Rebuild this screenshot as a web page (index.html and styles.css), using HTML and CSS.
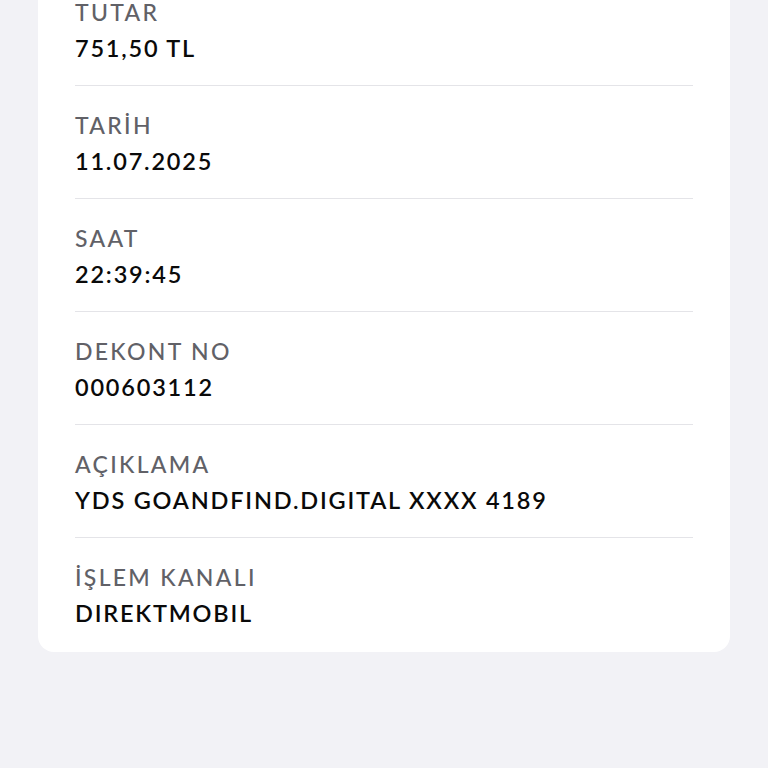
FILE: index.html
```html
<!DOCTYPE html>
<html lang="tr">
<head>
<meta charset="utf-8">
<link rel="stylesheet" href="styles.css">
</head>
<body>
<main class="page">
  <section class="card">
    <div class="row"><div class="label">TUTAR</div><div class="value">751,50 TL</div></div>
    <div class="row"><div class="label">TARİH</div><div class="value">11.07.2025</div></div>
    <div class="row"><div class="label">SAAT</div><div class="value">22:39:45</div></div>
    <div class="row"><div class="label">DEKONT NO</div><div class="value">000603112</div></div>
    <div class="row"><div class="label">AÇIKLAMA</div><div class="value">YDS GOANDFIND.DIGITAL XXXX 4189</div></div>
    <div class="row"><div class="label">İŞLEM KANALI</div><div class="value">DIREKTMOBIL</div></div>
  </section>
</main>
</body>
</html>
```
FILE: styles.css
```css
html, body {
  margin: 0;
  padding: 0;
  background: #f2f2f6;
  height: 100%;
  overflow: hidden;
}
.page {
  padding: 0 38px;
  font-family: "Lato", "Noto Sans", sans-serif;
}
.card {
  margin-top: -27px;
  background: #ffffff;
  border-radius: 0 0 16px 16px;
  padding: 0 37px;
}
.row {
  padding: 25px 0 23px;
  border-bottom: 1px solid #e4e4e8;
}
.row:last-child {
  border-bottom: none;
  padding-bottom: 25px;
}
.label {
  font-size: 23px;
  line-height: 28px;
  font-weight: 500;
  color: #616167;
  letter-spacing: 2.3px;
}
.value {
  margin-top: 8px;
  font-size: 23.5px;
  line-height: 28px;
  font-weight: 600;
  color: #0a0a0a;
  letter-spacing: 1.8px;
}
```
